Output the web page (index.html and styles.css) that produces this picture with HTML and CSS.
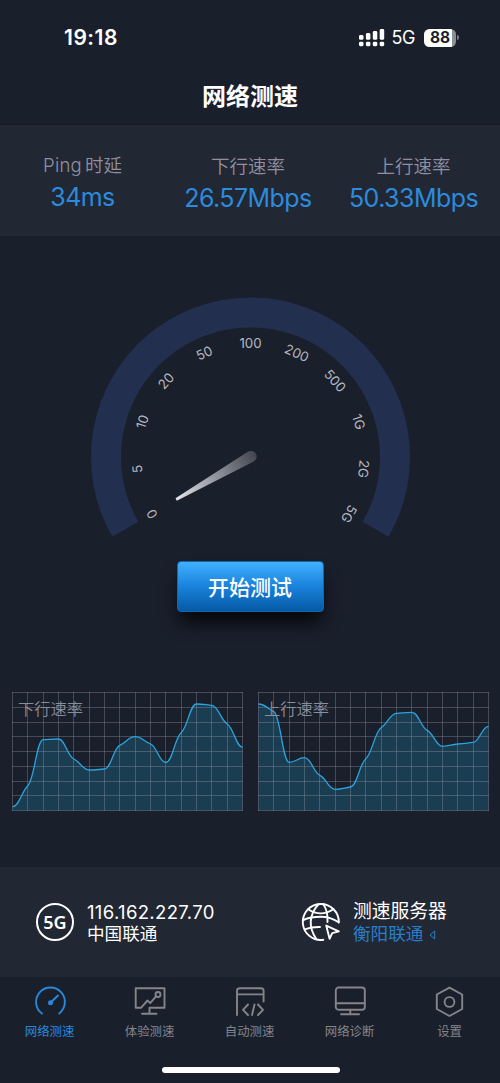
FILE: index.html
```html
<!DOCTYPE html>
<html lang="zh-CN">
<head>
<meta charset="utf-8">
<meta name="viewport" content="width=device-width">
<title>网络测速</title>
<link rel="stylesheet" href="styles.css">
</head>
<body>
<div class="app">
  <div class="status">
    <span class="clock">19:18</span>
    <div class="status-right">
      <svg class="signal" width="26" height="19" viewBox="0 0 26 19" fill="#fff">
        <rect x="0" y="7" width="4.5" height="4.8" rx="1.4"/><rect x="6.9" y="5" width="4.5" height="6.8" rx="1.4"/><rect x="13.8" y="3" width="4.5" height="8.8" rx="1.4"/><rect x="20.7" y="1" width="4.5" height="10.8" rx="1.4"/>
        <rect x="0" y="13.7" width="4.5" height="4.5" rx="1.4"/><rect x="6.9" y="13.7" width="4.5" height="4.5" rx="1.4"/><rect x="13.8" y="13.7" width="4.5" height="4.5" rx="1.4"/><rect x="20.7" y="13.7" width="4.5" height="4.5" rx="1.4"/>
      </svg>
      <span class="network">5G</span>
      <span class="battery">88</span><span class="battery-tip"></span>
    </div>
  </div>
  <h1 class="title">网络测速</h1>

  <section class="stats">
    <div class="stat ping"><div class="stat-label"><span class="latin">Ping</span>时延</div><div class="stat-value">34ms</div></div>
    <div class="stat"><div class="stat-label">下行速率</div><div class="stat-value">26.57Mbps</div></div>
    <div class="stat"><div class="stat-label">上行速率</div><div class="stat-value">50.33Mbps</div></div>
  </section>

  <section class="meter">
    <svg class="gauge" width="320" height="250" viewBox="-160.5 -167 320 250">
      <defs><linearGradient id="needle" gradientUnits="userSpaceOnUse" x1="-75" y1="42" x2="5" y2="-3"><stop offset="0" stop-color="#e4e5ec"/><stop offset=".35" stop-color="#aaacb5"/><stop offset="1" stop-color="#43464f"/></linearGradient></defs>
      <path d="M-125.14 72.25A144.5 144.5 0 1 1 125.14 72.25" fill="none" stroke="#222f4f" stroke-width="30"/>
      <g class="ticks">
        <text transform="rotate(-120) translate(0 -109)">0</text>
        <text transform="rotate(-96) translate(0 -109)">5</text>
        <text transform="rotate(-72) translate(0 -109)">10</text>
        <text transform="rotate(-48) translate(0 -109)">20</text>
        <text transform="rotate(-24) translate(0 -109)">50</text>
        <text transform="translate(0 -109)">100</text>
        <text transform="rotate(24) translate(0 -109)">200</text>
        <text transform="rotate(48) translate(0 -109)">500</text>
        <text transform="rotate(72) translate(0 -109)">1G</text>
        <text transform="rotate(96) translate(0 -109)">2G</text>
        <text transform="rotate(120) translate(0 -109)">5G</text>
      </g>
      <path d="M-75 41.2L-2.3-5.4A5.7 5.7 0 1 1 3.2 4.6L-73.7 43.8Z" fill="url(#needle)"/>
    </svg>
    <button class="start">开始测试</button>
  </section>

  <section class="charts">
    <div class="chart"><svg class="plot" id="download" width="231" height="119"></svg><span class="chart-label">下行速率</span></div>
    <div class="chart"><svg class="plot" id="upload" width="231" height="119"></svg><span class="chart-label">上行速率</span></div>
  </section>

  <section class="server">
    <div class="isp">
      <span class="badge">5G</span>
      <div class="lines"><div class="ip">116.162.227.70</div><div class="carrier">中国联通</div></div>
    </div>
    <div class="node">
      <svg class="globe" width="40" height="40" viewBox="0 0 40 40" fill="none" stroke="#fff" stroke-width="1.9" stroke-linecap="round" stroke-linejoin="round">
        <path d="M37.8 20.5A18 18 0 1 0 22.3 37.8"/>
        <path d="M7.2 7.2Q19.7 15.5 32.2 7.2M2.2 18Q10 14.8 19.7 14.8T37.6 20.3M3.6 27.3Q11 24.8 19 25"/>
        <path d="M17.5 2.2Q3 19 15.4 37.2M22.3 2.2Q27 8.5 26.5 20"/>
        <path d="M25.2 23.6L28.6 36.8L31.2 31.2L37.8 29.4Z"/>
      </svg>
      <div class="lines"><div class="node-title">测速服务器</div><div class="node-name">衡阳联通<svg class="arrow" width="7" height="10" viewBox="0 0 7 10"><path d="M5.7 1V9L1 5Z" fill="none" stroke="#287fc8"/></svg></div></div>
    </div>
  </section>

  <nav class="tabs">
    <div class="tab active">
      <svg class="icon" width="34" height="32" viewBox="0 0 34 32"><path d="M9 27.6A14.4 14.4 0 1 1 26.2 27.4"/><path d="M18.2 16L25 9.5"/><circle cx="17.5" cy="16.8" r="2.5" fill="currentColor" stroke="none"/></svg>
      <span>网络测速</span>
    </div>
    <div class="tab">
      <svg class="icon" width="34" height="32" viewBox="0 0 34 32"><path d="M26 2.2H2.7V21.7H8.2L14.5 14.5L17.2 17.2L23.2 10.2M26 2.2H31.5V21.7H16.5V27.8M9 27.8H23.5"/><circle cx="25" cy="8.5" r="2.5"/></svg>
      <span>体验测速</span>
    </div>
    <div class="tab">
      <svg class="icon" width="34" height="32" viewBox="0 0 34 32"><path d="M4 29V4.8Q4 2.2 6.6 2.2H28Q30.6 2.2 30.6 4.8V15.5M4 8.4H30.6M15 18.5L10 23.8L15 29M21.5 18.5L19 29M25 18.5L30 23.8L25 29"/></svg>
      <span>自动测速</span>
    </div>
    <div class="tab">
      <svg class="icon" width="34" height="32" viewBox="0 0 34 32"><rect x="2.8" y="1.5" width="29" height="22.2" rx="2.8"/><path d="M2.8 17.3H31.8M17.3 23.7V28.3M8 28.3H26"/></svg>
      <span>网络诊断</span>
    </div>
    <div class="tab">
      <svg class="icon" width="34" height="32" viewBox="0 0 34 32"><path d="M16.5 1.6L29.2 8.5V23L16.5 30L3.8 23V8.5Z"/><circle cx="16.5" cy="16" r="4.9"/></svg>
      <span>设置</span>
    </div>
  </nav>
  <div class="home"></div>
</div>
<script src="charts.js"></script>
</body>
</html>
```

FILE: styles.css
```css
* { box-sizing: border-box; }
body { margin: 0; background: #1a1f2c; color: #fff; font-family: Inter, "Noto Sans CJK SC", sans-serif; }
.app { width: 500px; height: 1083px; display: flex; flex-direction: column; overflow: hidden; }
.status { height: 75px; padding: 0 41px 0 64px; display: flex; justify-content: space-between; align-items: center; }
.clock { font-size: 21px; font-weight: 600; letter-spacing: 0.5px; }
.status-right { display: flex; align-items: center; }
.signal { margin-right: -1px; }
.network { margin: 0 9px 0 7px; font-size: 18px; letter-spacing: -0.4px; }
.battery { width: 32px; height: 18px; border-radius: 5.5px; background: linear-gradient(90deg, #fff 88%, #8b8e96 88%); color: #1a1f2c; font-size: 15.5px; line-height: 18px; font-weight: 700; text-align: center; }
.battery-tip { width: 2px; height: 5px; margin-left: 1px; border-radius: 0 2px 2px 0; background: #777b84; }
.title { height: 50px; margin: 0; padding-top: 4px; line-height: 35px; font-size: 24px; font-weight: 700; text-align: center; border-bottom: 1px solid #131823; }
.stats { height: 111px; padding-top: 26px; background: #222734; display: grid; grid-template-columns: 165px 166px 165px; }
.stat { text-align: center; }
.ping { margin-top: -1px; }
.stat-label { height: 29px; line-height: 30px; font-size: 18.5px; font-weight: 350; color: #9090a0; }
.latin { margin-right: 3px; letter-spacing: 0.2px; }
.stat-value { line-height: 36px; font-size: 25px; letter-spacing: -0.55px; color: #2b8bdd; }
.meter { height: 456px; padding-top: 54px; display: flex; flex-direction: column; align-items: center; }
.gauge { flex: none; }
.ticks { fill: #b5b7bf; font-size: 13.3px; text-anchor: middle; }
.start { width: 147px; height: 51px; margin-top: 21px; padding: 0 0 2px; border: 1px solid #1766a7; border-radius: 4px; background: linear-gradient(#41b0ff, #1982db 50%, #055aa5); color: #fff; font: 500 21px "Noto Sans CJK SC", sans-serif; box-shadow: 0 13px 18px -3px #050609; }
.charts { height: 175px; padding: 0 11px 0 12px; display: flex; justify-content: space-between; align-items: flex-start; }
.chart { width: 231px; height: 119px; position: relative; }
.plot { display: block; }
.chart-label { position: absolute; left: 6px; top: 3px; font-size: 16.3px; line-height: 28px; font-weight: 350; color: #8b8d99; }
.grid { stroke: #9b97a6; stroke-opacity: .36; fill: none; }
.area { fill: #1a3d52; }
.curve { fill: none; stroke: #2aa4dc; stroke-width: 1.3; }
.server { height: 110px; background: #222734; display: flex; align-items: center; }
.isp { width: 265px; padding-left: 36px; display: flex; align-items: center; }
.badge { width: 38px; height: 38px; margin-right: 13px; border: 2px solid #fff; border-radius: 50%; font: 600 18px/34px "Noto Sans", sans-serif; text-align: center; }
.lines { padding-top: 1px; line-height: 22px; font-size: 17.6px; }
.ip { font-size: 18.5px; letter-spacing: 0.35px; }
.node { padding-left: 36px; display: flex; align-items: center; }
.globe { margin-right: 12px; }
.node-title { font-size: 18.8px; }
.node-name { color: #287fc8; }
.arrow { margin-left: 6px; }
.tabs { height: 106px; display: grid; grid-template-columns: repeat(5, 100px); padding-top: 9px; margin-left: -0.4px; }
.tab { display: flex; flex-direction: column; align-items: center; color: #858589; font-size: 12.4px; line-height: 20px; }
.tab span { margin-top: 4px; }
.active { color: #2889dc; }
.icon { fill: none; stroke: currentColor; stroke-width: 1.9; stroke-linejoin: round; stroke-linecap: round; }
.home { width: 178px; height: 6px; margin: -16px 0 0 162px; border-radius: 3px; background: #fff; flex: none; }
```

FILE: charts.js
```js
const WIDTH = 230, HEIGHT = 118, COLS = 15, ROWS = 8;

// Limits tangents at each sample so the curve never overshoots.
function curvePath(values) {
  const step = WIDTH / (values.length - 1);
  const slopes = values.map((v, i) => {
    if (i === 0 || i === values.length - 1) return 0;
    const a = (v - values[i - 1]) / step, b = (values[i + 1] - v) / step;
    if (a * b <= 0) return 0;
    return Math.sign(a) * Math.min(Math.abs(a), Math.abs(b), Math.abs(a + b) * 0.22);
  });
  const h = step * 0.43;
  let d = `M.5 ${values[0]}`;
  for (let i = 1; i < values.length; i++) {
    const x0 = .5 + (i - 1) * step, x1 = .5 + i * step;
    d += `C${x0 + h} ${values[i - 1] + slopes[i - 1] * h} ${x1 - h} ${values[i] - slopes[i] * h} ${x1} ${values[i]}`;
  }
  return d;
}

function draw(id, values) {
  let grid = '';
  for (let i = 0; i <= COLS; i++) grid += `M${Math.round(i * WIDTH / COLS) + .5} 0V${HEIGHT + 1}`;
  for (let i = 0; i <= ROWS; i++) grid += `M0 ${Math.round(i * HEIGHT / ROWS) + .5}H${WIDTH + 1}`;
  const d = curvePath(values);
  document.getElementById(id).innerHTML =
    `<path class="area" d="${d}V118.5H.5Z"/><path class="grid" d="${grid}"/><path class="curve" d="${d}"/>`;
}

draw('download', [114.7, 93.7, 47.7, 47, 67, 78, 77, 53.3, 44.7, 52, 70.5, 40.7, 12, 13.3, 32, 55]);
draw('upload', [12, 19.7, 70.3, 65.7, 83.3, 97.3, 95, 66.7, 35.7, 21.3, 20.3, 38.3, 54.3, 52, 50.3, 34.3]);
```
